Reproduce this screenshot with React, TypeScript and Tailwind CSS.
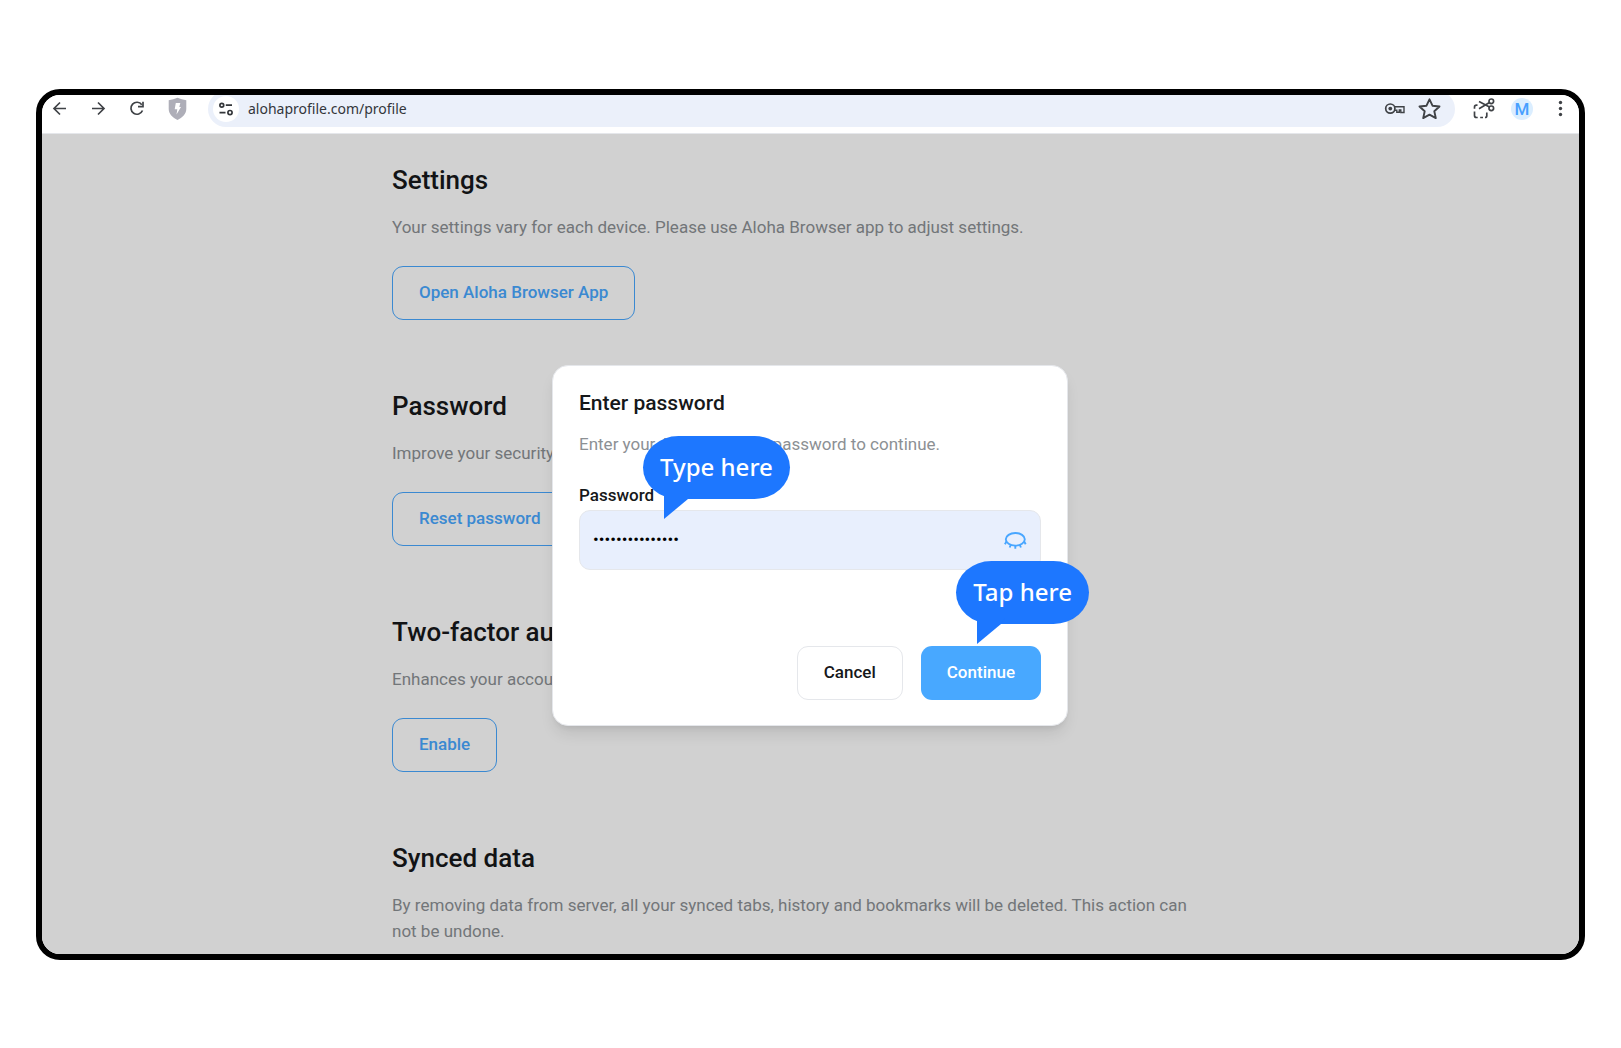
import { useState } from 'react';
import type { ReactNode } from 'react';

const sections = [
  {
    title: 'Settings',
    text: 'Your settings vary for each device. Please use Aloha Browser app to adjust settings.',
    action: 'Open Aloha Browser App',
  },
  {
    title: 'Password',
    text: 'Improve your security by changing your password regularly.',
    action: 'Reset password',
  },
  {
    title: 'Two-factor authentication',
    text: 'Enhances your account security with a second step.',
    action: 'Enable',
  },
  {
    title: 'Synced data',
    text: 'By removing data from server, all your synced tabs, history and bookmarks will be deleted. This action can not be undone.',
  },
];

function IconButton({ label, children }: { label: string; children: ReactNode }) {
  return (
    <button type="button" aria-label={label} className="flex size-6 shrink-0 items-center justify-center">
      <svg viewBox="0 0 24 24" className="size-6" fill="none" stroke="#3f4246" strokeWidth="1.7">
        {children}
      </svg>
    </button>
  );
}

function Toolbar() {
  return (
    <header className="border-b border-gray-200 bg-white pr-[7px] pb-1.5 pl-1.5">
      <div className="-mt-1 flex h-9 items-center gap-[15px]">
        <IconButton label="Back">
          <path d="M18 11.500H6.500M12 5.500l-6 6 6 6" />
        </IconButton>
        <IconButton label="Forward">
          <path d="M5 11.500H16.500M11 5.500l6 6-6 6" />
        </IconButton>
        <IconButton label="Reload">
          <path d="M15.800 7.700A6 6 0 1 0 16.500 13.500" />
          <path d="M17 4.800v4.900h-5" />
        </IconButton>
        <IconButton label="Shield">
          <path
            d="M12.500 .8C15 2 18.500 3 21.300 3.200V12c0 5-4 8.800-8.800 11C7.700 20.800 3.700 17 3.700 12V3.200C6.500 3 10 2 12.500 .8Z"
            fill="#aeaeb8"
            stroke="none"
          />
          <path d="M10.800 6h4.500l-1 4h1.700l-4.500 7.500.8-5.200H9.700Z" fill="#fff" stroke="none" />
        </IconButton>

        <div className="mr-0.5 ml-1 flex h-9 min-w-0 flex-1 items-center rounded-full bg-[#ebf0fa] pr-3.5 pl-[5px]">
          <button
            type="button"
            aria-label="Site information"
            className="flex size-[26px] shrink-0 items-center justify-center rounded-full bg-white"
          >
            <svg viewBox="0 0 16 16" className="size-4" fill="none" stroke="#33363a" strokeWidth="1.7">
              <circle cx="3.800" cy="4.200" r="1.900" />
              <path d="M7.800 4.200h6.200M1.500 11.600h6" />
              <circle cx="12" cy="11.600" r="2.100" />
            </svg>
          </button>
          <input
            type="text"
            aria-label="Address"
            defaultValue="alohaprofile.com/profile"
            className="ml-[9px] min-w-0 flex-1 bg-transparent font-['Noto_Sans',sans-serif] text-sm text-[#33363a] outline-none"
          />
          <div className="flex gap-2.5">
            <IconButton label="Saved passwords">
              <circle cx="7.300" cy="11.600" r="4.600" />
              <circle cx="7.300" cy="11.600" r="1.900" fill="#3f4246" stroke="none" />
              <path d="M11.500 9.800H21V15.500H17.800V13H16.300V15.200H13.800V13.200H11.700" strokeWidth="1.400" />
            </IconButton>
            <IconButton label="Bookmark this page">
              <path
                d="M12.500 2.300l3 6.400 7 .8-5.200 4.700 1.500 6.900L12.500 17.700l-6.300 3.400 1.500-6.900L2.500 9.500l7-.8Z"
                strokeWidth="1.900"
                strokeLinejoin="round"
              />
            </IconButton>
          </div>
        </div>

        <IconButton label="Screenshot">
          <circle cx="19.300" cy="4.300" r="2.300" />
          <circle cx="19.300" cy="11.300" r="2.300" />
          <path d="M17.500 10 7 4.500M17.500 5.600 7 11.700" />
          <path d="M5.500 8.200H4.500A2 2 0 0 0 2.500 10.200v1.500M2.500 14.500v4A2 2 0 0 0 4.500 20.500h1.200M8.200 20.500h2.800M13 20.500a1.800 1.800 0 0 0 1.800-1.800V15.500" />
        </IconButton>
        <button
          type="button"
          aria-label="Profile M"
          className="flex size-[22px] shrink-0 items-center justify-center rounded-full bg-[#dbeeff] font-['Roboto',sans-serif] text-[17px] leading-none font-medium text-[#479fff]"
        >
          M
        </button>
        <IconButton label="Menu">
          <g fill="#3f4246" stroke="none">
            <circle cx="12.500" cy="5.500" r="1.700" />
            <circle cx="12.500" cy="11.500" r="1.700" />
            <circle cx="12.500" cy="17.500" r="1.700" />
          </g>
        </IconButton>
      </div>
    </header>
  );
}

function Bubble({ children }: { children: ReactNode }) {
  return (
    <div className="relative flex h-[63px] items-center rounded-[36px/32px] bg-[#1d77ff] px-[17px] pb-0.5 font-['Noto_Sans',sans-serif] text-2xl font-medium whitespace-nowrap text-white">
      {children}
      <svg viewBox="0 0 28 26" className="absolute top-[57px] left-[21px] h-[26px] w-7" fill="#1d77ff">
        <path d="M0 0H28L24 6 0 26Z" />
      </svg>
    </div>
  );
}

function PasswordDialog() {
  const [password, setPassword] = useState('aloha-profile-1');
  const [visible, setVisible] = useState(false);

  return (
    <form
      role="dialog"
      aria-labelledby="dialog-title"
      onSubmit={(e) => e.preventDefault()}
      className="relative w-full max-w-[516px] rounded-2xl border border-gray-200 bg-white px-[26px] pt-6 pb-[25px] shadow-lg"
    >
      <h2 id="dialog-title" className="text-[21px] leading-[26px] font-medium text-[#16181a]">
        Enter password
      </h2>
      <p className="mt-[15px] text-[17px] leading-[26px] text-[#8c9094]">
        Enter your Aloha account password to continue.
      </p>

      <label htmlFor="password" className="mt-[26px] block text-[17px] leading-6 font-medium text-[#16181a]">
        Password
      </label>
      <div className="mt-[3px] flex h-[60px] items-center rounded-[11px] border border-gray-200 bg-[#e8effd] px-[13px]">
        <input
          id="password"
          type={visible ? 'text' : 'password'}
          value={password}
          onChange={(e) => setPassword(e.target.value)}
          className="min-w-0 flex-1 bg-transparent text-[17px] text-black outline-none"
        />
        <button type="button" aria-label="Show password" onClick={() => setVisible(!visible)}>
          <svg viewBox="0 0 24 24" className="size-6" fill="none" stroke="#48a6ff" strokeWidth="1.900">
            <ellipse cx="12.300" cy="11.300" rx="9.500" ry="6.300" />
            <path d="M3.500 13.500 1.900 16.300M7.700 17l-1 2.500M12.300 17.600v3.100M16.900 17l1 2.500M21.100 13.500l1.600 2.800" />
          </svg>
        </button>
      </div>

      <div className="mt-[76px] flex justify-end gap-[18px] text-[17px] font-medium">
        <button
          type="button"
          className="h-[54px] rounded-[11px] border border-gray-200 bg-white px-[26px] text-[#16181a]"
        >
          Cancel
        </button>
        <button type="submit" className="h-[54px] rounded-[11px] bg-[#48a8ff] px-[26px] text-white">
          Continue
        </button>
      </div>

      {/* Hints pointing at the field and the submit button */}
      <div className="absolute top-[70px] left-[90px]">
        <Bubble>Type here</Bubble>
      </div>
      <div className="absolute top-[195px] -right-[22px]">
        <Bubble>Tap here</Bubble>
      </div>
    </form>
  );
}

export default function App() {
  return (
    <div className="min-h-screen bg-white px-9 py-[89px] font-['Roboto',sans-serif]">
      <div className="overflow-hidden rounded-3xl border-[6px] border-black">
        <Toolbar />

        <main className="relative bg-white px-6 pt-[30px] pb-2.5">
          <div className="mx-auto flex max-w-[837px] flex-col gap-[70px]">
            {sections.map((section) => (
              <section key={section.title}>
                <h1 className="text-[26px] leading-8 font-medium text-[#16181a]">{section.title}</h1>
                <p className="mt-[18px] max-w-[820px] text-[17px] leading-[26px] text-[#8c9094]">{section.text}</p>
                {section.action && (
                  <button
                    type="button"
                    className="mt-[26px] h-[54px] rounded-[11px] border border-[#48a8ff] px-[26px] text-[17px] font-medium text-[#48a8ff]"
                  >
                    {section.action}
                  </button>
                )}
              </section>
            ))}
          </div>

          <div className="absolute inset-0 flex items-center justify-center bg-black/18 pt-[3px] pr-px">
            <PasswordDialog />
          </div>
        </main>
      </div>
    </div>
  );
}
